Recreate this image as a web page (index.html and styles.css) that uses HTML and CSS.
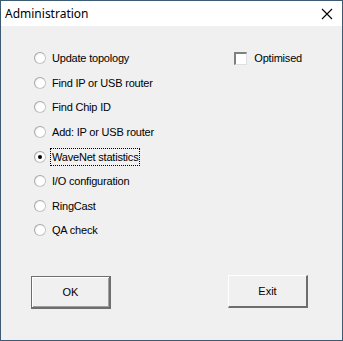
FILE: index.html
```html
<!DOCTYPE html>
<html lang="en">
<head>
  <meta charset="UTF-8">
  <title>Administration</title>
  <link rel="stylesheet" href="styles.css">
</head>
<body>
  <div class="window">
    <div class="titlebar">
      <span class="title">Administration</span>
      <svg class="close" width="12" height="12" viewBox="0 0 12 12">
        <path d="M1 1 L11 11 M11 1 L1 11" stroke="#000" stroke-width="1.1"/>
      </svg>
    </div>

    <div class="content">
      <div class="options">
        <ul class="radios">
          <li><span class="radio"></span><span class="label">Update topology</span></li>
          <li><span class="radio"></span><span class="label">Find IP or USB router</span></li>
          <li><span class="radio"></span><span class="label">Find Chip ID</span></li>
          <li><span class="radio"></span><span class="label">Add: IP or USB router</span></li>
          <li><span class="radio checked"></span><span class="label focus">WaveNet statistics</span></li>
          <li><span class="radio"></span><span class="label">I/O configuration</span></li>
          <li><span class="radio"></span><span class="label">RingCast</span></li>
          <li><span class="radio"></span><span class="label">QA check</span></li>
        </ul>
        <div class="check-row">
          <span class="checkbox"></span><span class="label">Optimised</span>
        </div>
      </div>

      <div class="buttons">
        <button class="btn default">OK</button>
        <button class="btn">Exit</button>
      </div>
    </div>
  </div>
</body>
</html>
```

FILE: styles.css
```css
* {
  margin: 0;
  padding: 0;
  box-sizing: border-box;
}
body {
  font-family: "Liberation Sans", Arial, sans-serif;
  background-color: #f0f0f0;
}

/* ウィンドウ枠 */
.window {
  width: 343px;
  height: 341px;
  border: 1px solid #3c5a74;
  background-color: #f0f0f0;
  display: flex;
  flex-direction: column;
}

.titlebar {
  height: 25px;
  background-color: #fff;
  display: flex;
  align-items: center;
  justify-content: space-between;
  padding: 0 9px 0 4px;
}
.title {
  font-family: "Noto Sans", sans-serif;
  font-size: 12px;
  color: #000;
}
.close {
  display: block;
}

.content {
  flex: 1;
  display: flex;
  flex-direction: column;
  padding: 20px 0 0 33px;
}

.options {
  display: flex;
  justify-content: space-between;
  padding-right: 38px;
}

.radios {
  list-style: none;
}
.radios li {
  height: 24.6px;
  display: flex;
  align-items: center;
  color: #000;
}

.label {
  font-size: 11px;
  line-height: 14px;
  letter-spacing: -0.2px;
  padding: 1px 1px;
  border: 1px dotted transparent;
}
.label.focus {
  border-color: #000;
}

/* ラジオボタン */
.radio {
  width: 12px;
  height: 12px;
  border-radius: 50%;
  border: 1px solid #c4c4c4;
  border-top-color: #a8a8a8;
  border-left-color: #a8a8a8;
  background: radial-gradient(circle at 60% 60%, #fff 45%, #e6e6e6 100%);
  margin-right: 4px;
  display: flex;
  align-items: center;
  justify-content: center;
}
.radio.checked::after {
  content: "";
  width: 4px;
  height: 4px;
  border-radius: 50%;
  background-color: #000;
}

/* チェックボックス */
.check-row {
  height: 24.6px;
  display: flex;
  align-items: center;
}
.checkbox {
  width: 13px;
  height: 13px;
  background-color: #fff;
  border-top: 2px solid #808080;
  border-left: 2px solid #808080;
  border-right: 1px solid #e0e0e0;
  border-bottom: 1px solid #e0e0e0;
  margin-right: 5px;
}

/* ボタン */
.buttons {
  display: flex;
  justify-content: space-between;
  align-items: flex-start;
  margin-left: -3px;
  padding: 32px 34px 0 0;
}
.btn {
  width: 80px;
  height: 33px;
  font-family: "Liberation Sans", Arial, sans-serif;
  font-size: 11px;
  color: #000;
  background-color: #f0f0f0;
  border-top: 1px solid #fff;
  border-left: 1px solid #fff;
  border-right: 2px solid #6e6e6e;
  border-bottom: 2px solid #6e6e6e;
}
.btn.default {
  border: 1px solid #6e6e6e;
  border-right-width: 2px;
  border-bottom-width: 2px;
  box-shadow: inset 1px 1px 0 #fff, inset -1px -1px 0 #a0a0a0;
  margin-top: 1px;
}
```
